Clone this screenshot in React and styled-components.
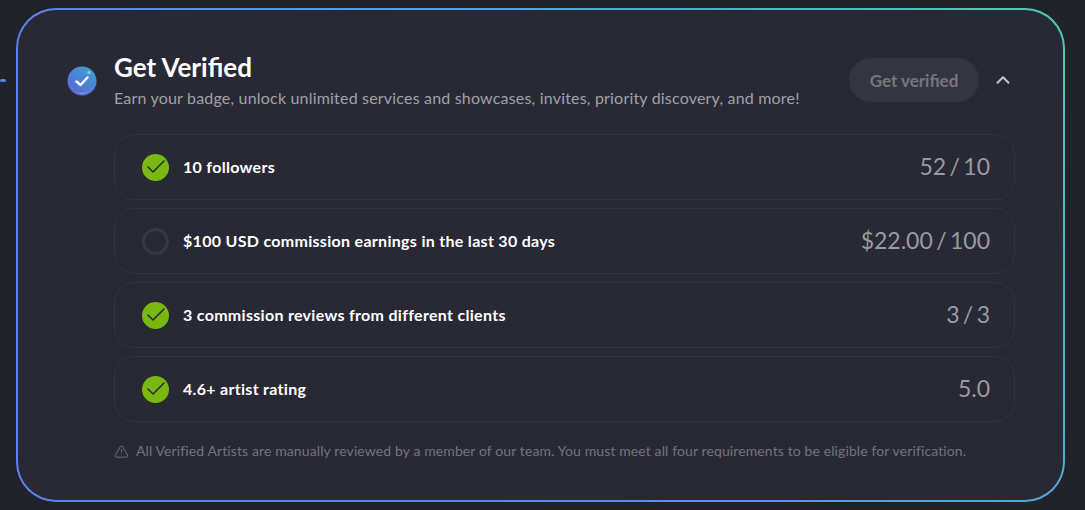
import React from "react";
import styled, { createGlobalStyle } from "styled-components";
import { Check, ChevronUp, TriangleAlert } from "lucide-react";

const Global = createGlobalStyle`
  html, body {
    margin: 0;
    background: #22222b;
    font-family: "Lato", "Liberation Sans", sans-serif;
  }
`;

const Page = styled.div`
  position: relative;
  width: 1085px;
  height: 510px;
  box-sizing: border-box;
  padding: 8px 20px 8px 16px;
  overflow: hidden;
`;

const Dash = styled.span`
  position: absolute;
  left: 0;
  top: 79px;
  width: 6px;
  height: 3px;
  border-radius: 1.5px;
  background: #5f80e6;
`;

const Card = styled.section`
  box-sizing: border-box;
  height: 494px;
  padding: 30px 48px 0 49px;
  border: 2px solid transparent;
  border-radius: 40px;
  background:
    linear-gradient(#292935, #292935) padding-box,
    linear-gradient(45deg, #5f80ee 0%, #5f80ee 30%, #5b9ae4 51%, #52a9d4 68%, #4bb8c4 83%, #4cc9b4 95%) border-box;
`;

const Head = styled.header`
  display: flex;
  align-items: center;
  height: 84px;
`;

const Badge = styled.svg`
  width: 30px;
  height: 30px;
  flex: none;
  margin-right: 17px;
  margin-top: -3px;
`;

const Titles = styled.div`
  flex: 1;
  margin-top: -5px;
`;

const Title = styled.h2`
  margin: 0;
  font-size: 26px;
  line-height: 30px;
  font-weight: 700;
  color: #fff;
`;

const Sub = styled.p`
  margin: 6px 0 0;
  font-size: 16px;
  line-height: 20px;
  letter-spacing: 0.19px;
  color: #a1a1a8;
`;

const Button = styled.button`
  width: 130px;
  height: 44px;
  margin-right: 13px;
  margin-top: -4px;
  padding: 0;
  border: 0;
  border-radius: 22px;
  background: #353540;
  color: #76767f;
  font: 700 17px "Lato", sans-serif;
`;

const Toggle = styled.span`
  display: flex;
  margin-right: 1px;
  margin-top: -4px;
  color: #c4c4c9;
`;

const List = styled.ul`
  list-style: none;
  margin: 10px 0 0 47px;
  padding: 0;
  display: flex;
  flex-direction: column;
  gap: 8px;
`;

const Row = styled.li`
  box-sizing: border-box;
  height: 66px;
  display: flex;
  align-items: center;
  padding: 0 24px 0 27px;
  border: 1px solid #343440;
  border-radius: 20px;
`;

const Tick = styled.span`
  box-sizing: border-box;
  width: 27px;
  height: 27px;
  flex: none;
  display: flex;
  align-items: center;
  justify-content: center;
  border-radius: 50%;
  margin-right: 14px;
  color: #2a2a36;
  background: ${(p) => (p.$done ? "#79b80e" : "transparent")};
  border: ${(p) => (p.$done ? "none" : "3px solid #383843")};
`;

const Label = styled.span`
  flex: 1;
  padding-bottom: 2px;
  font-size: 16px;
  font-weight: 700;
  letter-spacing: 0.3px;
  color: #fff;
`;

const Value = styled.span`
  padding-bottom: 2px;
  font-size: 23px;
  word-spacing: -2.5px;
  color: #9a9aa2;
`;

const Note = styled.p`
  display: flex;
  align-items: center;
  gap: 7px;
  margin: 20px 0 0 47px;
  font-size: 14px;
  line-height: 18px;
  letter-spacing: 0.11px;
  color: #74747d;
`;

const rows = [
  { label: "10 followers", value: "52 / 10", done: true },
  { label: "$100 USD commission earnings in the last 30 days", value: "$22.00 / 100", done: false },
  { label: "3 commission reviews from different clients", value: "3 / 3", done: true },
  { label: "4.6+ artist rating", value: "5.0", done: true },
];

const VerifiedBadge = () => (
  <Badge viewBox="0 0 30 30">
    <defs>
      <linearGradient id="orb" x1="0.8" y1="0" x2="0.2" y2="1">
        <stop offset="0" stopColor="#3fa0cf" />
        <stop offset="0.55" stopColor="#4d7fd6" />
        <stop offset="1" stopColor="#5b62cf" />
      </linearGradient>
    </defs>
    <circle cx="15" cy="15" r="14.5" fill="url(#orb)" />
    <path d="M4 20c3 6 8 8 11 8s8-2 11-8c-2 9-20 9-22 0z" fill="#8fb4ee" opacity="0.7" />
    <circle cx="22" cy="6.5" r="1.6" fill="#9fdcea" opacity="0.8" />
    <path d="M9.5 15.5l4 3.5 7-7.5" fill="none" stroke="#fff" strokeWidth="2.4" strokeLinecap="round" strokeLinejoin="round" />
  </Badge>
);

export default function App() {
  return (
    <Page>
      <Global />
      <Dash />
      <Card>
        <Head>
          <VerifiedBadge />
          <Titles>
            <Title>Get Verified</Title>
            <Sub>Earn your badge, unlock unlimited services and showcases, invites, priority discovery, and more!</Sub>
          </Titles>
          <Button>Get verified</Button>
          <Toggle>
            <ChevronUp size={22} strokeWidth={2.2} />
          </Toggle>
        </Head>
        <List>
          {rows.map((r) => (
            <Row key={r.label}>
              <Tick $done={r.done}>{r.done && <Check size={24} strokeWidth={1.6} />}</Tick>
              <Label>{r.label}</Label>
              <Value>{r.value}</Value>
            </Row>
          ))}
        </List>
        <Note>
          <TriangleAlert size={15} strokeWidth={1.5} />
          All Verified Artists are manually reviewed by a member of our team. You must meet all four requirements to be eligible for verification.
        </Note>
      </Card>
    </Page>
  );
}
